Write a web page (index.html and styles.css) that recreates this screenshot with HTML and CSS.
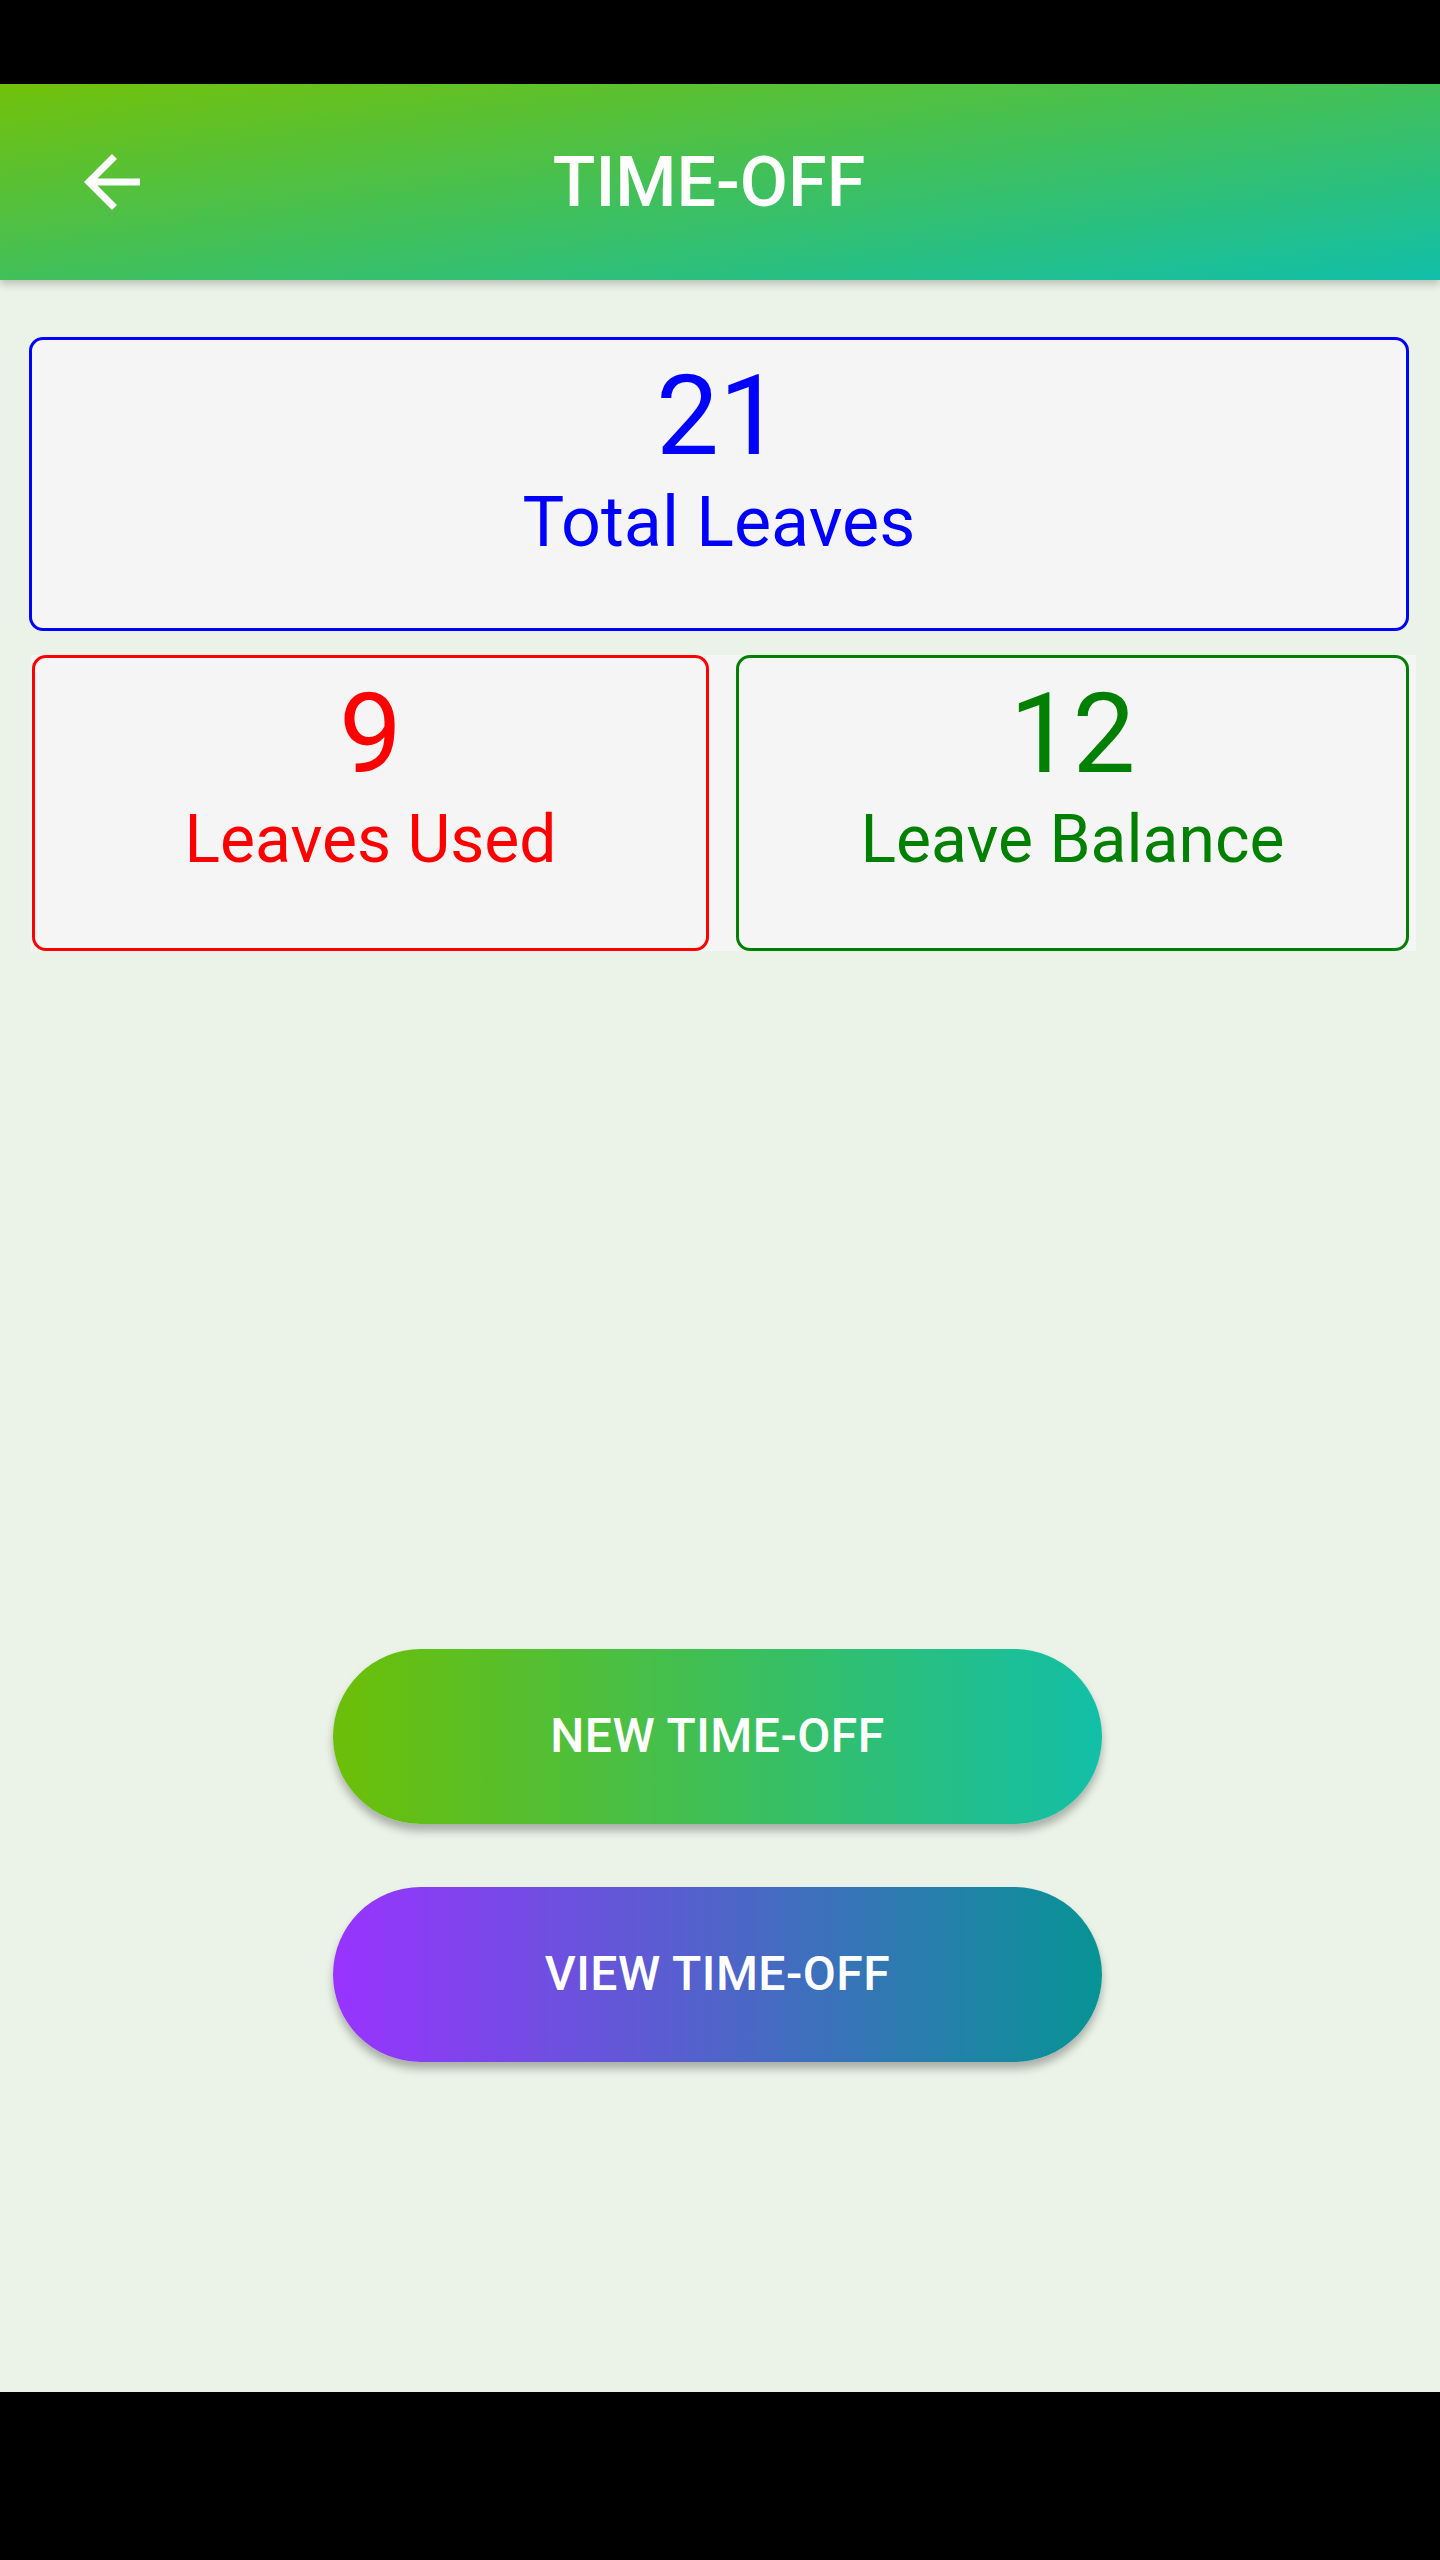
FILE: index.html
```html
<!DOCTYPE html>
<html>
<head>
<meta charset="utf-8">
<link rel="stylesheet" href="styles.css">
</head>
<body>
<div class="statusbar"></div>
<div class="app">
  <header class="toolbar">
    <svg class="back" viewBox="0 0 24 24" width="84" height="84"><path fill="#fff" d="M20 11H7.83l5.59-5.59L12 4l-8 8 8 8 1.41-1.41L7.83 13H20v-2z"/></svg>
    <h1 class="title">TIME-OFF</h1>
  </header>
  <main class="content">
    <section class="card card-total">
      <div class="num">21</div>
      <div class="label">Total Leaves</div>
    </section>
    <div class="row">
      <section class="card card-used">
        <div class="num">9</div>
        <div class="label">Leaves Used</div>
      </section>
      <section class="card card-balance">
        <div class="num">12</div>
        <div class="label">Leave Balance</div>
      </section>
    </div>
    <div class="actions">
      <button class="btn btn-new">NEW TIME-OFF</button>
      <button class="btn btn-view">VIEW TIME-OFF</button>
    </div>
  </main>
</div>
<div class="navbar"></div>
</body>
</html>
```

FILE: styles.css
```css
html, body {
  margin: 0;
  padding: 0;
  background: #000;
}
body {
  width: 1440px;
  height: 2560px;
  display: flex;
  flex-direction: column;
  font-family: Roboto, "Liberation Sans", sans-serif;
}
.statusbar {
  height: 84px;
  background: #000;
  flex: none;
}
.app {
  height: 2308px;
  background: #ebf3e8;
  display: flex;
  flex-direction: column;
  flex: none;
}
.navbar {
  flex: 1;
  background: #000;
}
.toolbar {
  height: 196px;
  flex: none;
  display: flex;
  align-items: center;
  padding-left: 70px;
  padding-right: 176px;
  background: linear-gradient(to bottom right, #72c10a, #11bfa9);
  box-shadow: 0 4px 8px rgba(0, 0, 0, 0.22);
  position: relative;
  z-index: 1;
}
.back {
  flex: none;
  display: block;
}
.title {
  flex: 1;
  margin: 0;
  text-align: center;
  color: #fff;
  font-size: 70px;
  font-weight: 500;
  line-height: 1;
}
.content {
  display: flex;
  flex-direction: column;
  padding-top: 57px;
}
.card {
  box-sizing: border-box;
  background: #f5f5f5;
  border: 3px solid;
  border-radius: 14px;
  text-align: center;
  padding-top: 10px;
}
.num {
  font-size: 112px;
  line-height: 131px;
}
.label {
  font-size: 70px;
  line-height: 82px;
}
.card-total {
  margin-left: 29px;
  width: 1380px;
  height: 294px;
  border-color: #0000ff;
  color: #0000ff;
}
.row {
  margin-top: 24px;
  margin-left: 31px;
  width: 1385px;
  height: 296px;
  background: #f5f5f5;
  display: grid;
  grid-template-columns: 677px 673px;
  column-gap: 27px;
  padding-left: 1px;
  box-sizing: border-box;
}
.row .card {
  height: 296px;
  padding-top: 10px;
}
.row .label {
  font-size: 66px;
}
.card-used {
  border-color: #ff0000;
  color: #ff0000;
}
.card-balance {
  border-color: #008000;
  color: #008000;
}
.actions {
  margin-top: 698px;
  display: flex;
  flex-direction: column;
  align-items: center;
  gap: 63px;
  padding-right: 5px;
}
.btn {
  width: 769px;
  height: 175px;
  border: none;
  border-radius: 88px;
  color: #fff;
  font-family: Roboto, "Liberation Sans", sans-serif;
  font-size: 48px;
  font-weight: 500;
  letter-spacing: 0.5px;
  box-shadow: 0 7px 8px rgba(0, 0, 0, 0.28);
  padding: 0 0 3px 0;
}
.btn-new {
  background: linear-gradient(to right, #6cbf06, #12bfa8);
}
.btn-view {
  background: linear-gradient(to right, #9933ff, #069494);
}
```
